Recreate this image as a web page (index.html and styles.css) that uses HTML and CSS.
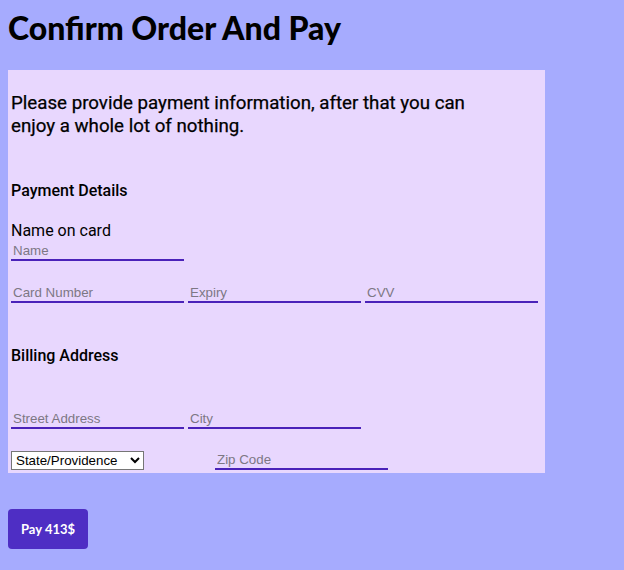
FILE: index.html
```html
<!DOCTYPE html>
<html>
<head>
<meta charset="utf-8">
<link rel="stylesheet" href="styles.css">
</head>
<body>
<h1 class="title">Confirm Order And Pay</h1>
<form class="panel">
  <p class="intro">Please provide payment information, after that you can enjoy a whole lot of nothing.</p>
  <h3 class="section">Payment Details</h3>
  <label class="label">Name on card</label>
  <div class="row row-name">
    <input class="field" type="text" placeholder="Name">
  </div>
  <div class="row row-card">
    <input class="field" type="text" placeholder="Card Number">
    <input class="field" type="text" placeholder="Expiry">
    <input class="field" type="text" placeholder="CVV">
  </div>
  <h3 class="section section-billing">Billing Address</h3>
  <div class="row row-street">
    <input class="field" type="text" placeholder="Street Address">
    <input class="field" type="text" placeholder="City">
  </div>
  <div class="row row-state">
    <select class="select"><option>State/Providence</option></select>
    <input class="field" type="text" placeholder="Zip Code">
  </div>
</form>
<button class="pay" type="button">Pay 413$</button>
</body>
</html>
```

FILE: styles.css
```css
body {
  margin: 8px;
  background: #a6abfe;
  font-family: Roboto, "Liberation Sans", sans-serif;
  color: #000;
}
.title {
  font-family: "Lato", "Open Sans", sans-serif;
  font-weight: 900;
  font-size: 32px;
  margin: 0 0 22px;
  line-height: 40px;
}
.panel {
  width: 534px;
  background: #e8d7fe;
  padding: 0 0 3px 3px;
  margin: 0;
  overflow: hidden;
}
.intro {
  font-size: 18.72px;
  line-height: 23px;
  width: 470px;
  margin: 22px 0 0;
  font-weight: 400;
  -webkit-text-stroke: 0.25px #000;
}
.section {
  font-size: 16px;
  font-weight: 500;
  margin: 43px 0 0;
  line-height: 19px;
}
.section-billing {
  margin-top: 43px;
}
.label {
  display: block;
  font-size: 16px;
  margin-top: 21px;
  line-height: 19px;
}
.row {
  display: flex;
  gap: 4px;
  align-items: flex-end;
}
.row-name { margin-top: 1px; }
.row-card { margin-top: 22px; }
.row-street { margin-top: 44px; }
.row-state { margin-top: 21px; }
.field {
  width: 173px;
  box-sizing: border-box;
  border: none;
  border-bottom: 2px solid #4a22b9;
  background: transparent;
  font-family: "Liberation Sans", Arial, sans-serif;
  font-size: 13.333px;
  padding: 1px 2px;
  height: 20px;
  outline: none;
}
.field::placeholder { color: #7d7784; }
.select {
  font-family: "Liberation Sans", Arial, sans-serif;
  font-size: 13.333px;
  width: 133px;
  height: 19px;
  margin-right: 67px;
  border: 1px solid #767676;
  background: #fff;
  color: #000;
}
.pay {
  display: block;
  margin-top: 36px;
  width: 80px;
  height: 40px;
  background: #4e2ec4;
  color: #fff;
  border: none;
  border-radius: 4px;
  font-family: "Lato", sans-serif;
  font-weight: 700;
  font-size: 13px;
}
```
